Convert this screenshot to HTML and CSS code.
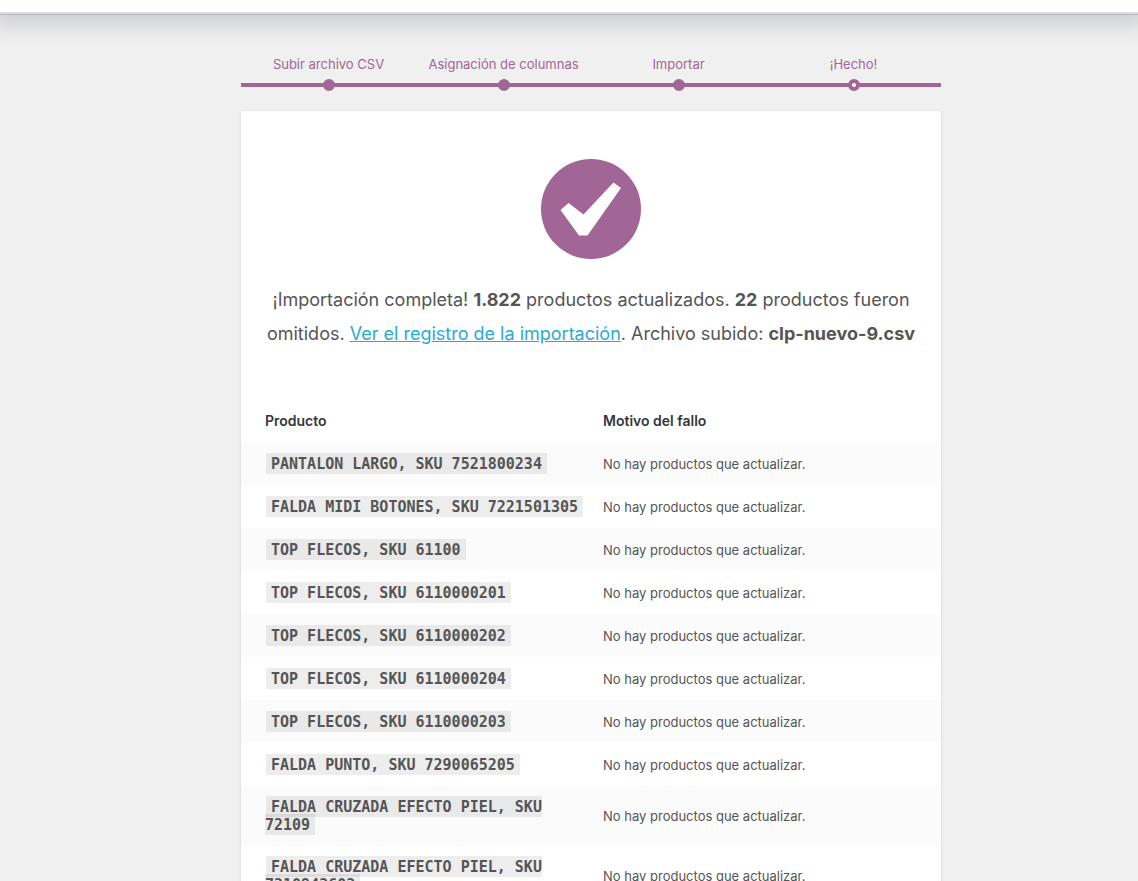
FILE: index.html
```html
<!DOCTYPE html>
<html lang="es">
<head>
    <meta charset="UTF-8">
    <meta name="viewport" content="width=device-width, initial-scale=1.0">
    <title>Importar productos</title>
    <link rel="stylesheet" href="styles.css">
</head>
<body>
    <header class="topbar"></header>

    <main class="importer">
        <!-- Progress steps -->
        <ol class="steps">
            <li>Subir archivo CSV</li>
            <li>Asignación de columnas</li>
            <li>Importar</li>
            <li class="active">¡Hecho!</li>
        </ol>

        <div class="card">
            <section class="done">
                <svg class="check" viewBox="0 0 100 100" aria-hidden="true">
                    <circle cx="50" cy="50" r="50" fill="#a16696"/>
                    <path d="M19.500 51 L27.500 44 L42.500 55.500 L72.500 23.500 L80 29 L46.500 76.500 H38 Z" fill="#fff"/>
                </svg>
                <p>
                    ¡Importación completa! <strong>1.822</strong> productos actualizados. <strong>22</strong> productos fueron omitidos. <a href="#log">Ver el registro de la importación</a>. Archivo subido: <strong>clp-nuevo-9.csv</strong>
                </p>
            </section>

            <table class="log" id="log">
                <thead>
                    <tr>
                        <th>Producto</th>
                        <th>Motivo del fallo</th>
                    </tr>
                </thead>
                <tbody>
                    <tr>
                        <td><code>PANTALON LARGO, SKU 7521800234</code></td>
                        <td>No hay productos que actualizar.</td>
                    </tr>
                    <tr>
                        <td><code>FALDA MIDI BOTONES, SKU 7221501305</code></td>
                        <td>No hay productos que actualizar.</td>
                    </tr>
                    <tr>
                        <td><code>TOP FLECOS, SKU 61100</code></td>
                        <td>No hay productos que actualizar.</td>
                    </tr>
                    <tr>
                        <td><code>TOP FLECOS, SKU 6110000201</code></td>
                        <td>No hay productos que actualizar.</td>
                    </tr>
                    <tr>
                        <td><code>TOP FLECOS, SKU 6110000202</code></td>
                        <td>No hay productos que actualizar.</td>
                    </tr>
                    <tr>
                        <td><code>TOP FLECOS, SKU 6110000204</code></td>
                        <td>No hay productos que actualizar.</td>
                    </tr>
                    <tr>
                        <td><code>TOP FLECOS, SKU 6110000203</code></td>
                        <td>No hay productos que actualizar.</td>
                    </tr>
                    <tr>
                        <td><code>FALDA PUNTO, SKU 7290065205</code></td>
                        <td>No hay productos que actualizar.</td>
                    </tr>
                    <tr>
                        <td><code>FALDA CRUZADA EFECTO PIEL, SKU 72109</code></td>
                        <td>No hay productos que actualizar.</td>
                    </tr>
                    <tr>
                        <td><code>FALDA CRUZADA EFECTO PIEL, SKU 7210942602</code></td>
                        <td>No hay productos que actualizar.</td>
                    </tr>
                </tbody>
            </table>
        </div>
    </main>
</body>
</html>
```

FILE: styles.css
```css
html {
    overflow: hidden;
}

body {
    margin: 0;
    background-color: #f0f0f0;
    color: #555;
    font-family: Inter, "Liberation Sans", sans-serif;
    font-size: 13px;
    line-height: 18px;
}

.topbar {
    height: 12px;
    background: #fff;
    border-bottom: 2px solid #dcdddf;
    box-shadow: 0 1px 0 #b4b9be, 0 4px 20px 8px rgba(85, 93, 102, 0.22);
}

.importer {
    max-width: 700px;
    margin: 0 auto;
    padding: 41px 0 40px 44px;
}

/* Steps */
.steps {
    display: flex;
    margin: 0 0 24px;
    padding: 0;
    list-style: none;
    color: #a16696;
}

.steps li {
    position: relative;
    flex: 1;
    padding-bottom: 10px;
    border-bottom: 4px solid #a16696;
    text-align: center;
}

.steps li::before {
    content: "";
    position: absolute;
    left: 50%;
    bottom: -8px;
    width: 4px;
    height: 4px;
    margin-left: -6px;
    border: 4px solid #a16696;
    border-radius: 50%;
    background: #a16696;
}

.steps .active::before {
    background: #fff;
}

/* Card */
.card {
    background: #fff;
    box-shadow: 0 1px 3px rgba(0, 0, 0, 0.13);
}

.done {
    padding: 48px 24px;
    text-align: center;
}

.check {
    display: block;
    width: 100px;
    height: 100px;
    margin: 0 auto 24px;
}

.done p {
    margin: 0;
    font-size: 18px;
    line-height: 34px;
}

.done a {
    color: #2ba9d8;
}

/* Failed products */
.log {
    width: 100%;
    border-collapse: collapse;
    table-layout: fixed;
}

.log th,
.log td {
    height: 43px;
    box-sizing: border-box;
    padding: 12px;
    text-align: left;
    vertical-align: middle;
}

.log th:first-child,
.log td:first-child {
    width: 50%;
    padding-right: 0;
    padding-left: 24px;
}

.log th {
    color: #32373c;
    font-size: 14px;
    font-weight: 600;
}

.log tbody tr:nth-child(odd) {
    background: #fbfbfb;
}

.log code {
    margin: 0 1px;
    padding: 2px 5px 1px;
    background: rgba(0, 0, 0, 0.07);
    font-family: "DejaVu Sans Mono", "Liberation Mono", monospace;
    font-size: 15px;
    font-weight: bold;
}
```
